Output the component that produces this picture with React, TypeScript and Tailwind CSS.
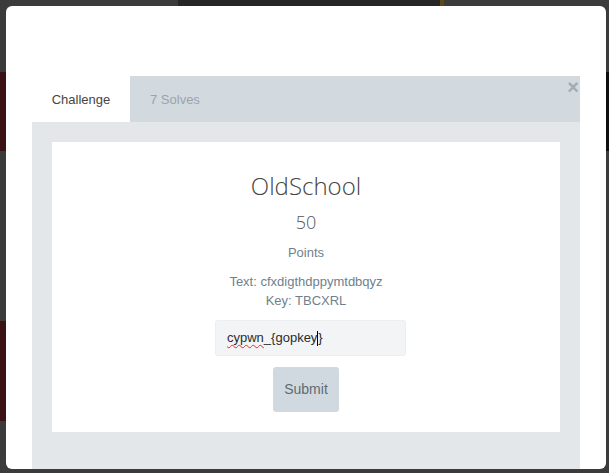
import React from "react";

export default function App() {
  return (
    <div className="relative h-[473px] w-[609px] overflow-hidden bg-[#3b3b3b] font-['Liberation_Sans',Arial,sans-serif]">
      {/* background page (dimmed) */}
      <div className="flex h-full flex-col">
        <div className="flex h-[72px] items-start">
          <div className="ml-[178px] h-[7px] w-[262px] bg-[#262626]" />
          <div className="h-[7px] w-[4px] bg-[#5a4a12]" />
        </div>
        <div className="flex h-[79px] justify-between">
          <div className="w-[6px] bg-[#3a1213]" />
          <div className="w-[3px] bg-[#0c1013]" />
        </div>
        <div className="h-[170px]" />
        <div className="flex h-[100px]">
          <div className="w-[6px] bg-[#3a1213]" />
        </div>
      </div>

      {/* modal */}
      <div className="absolute left-[6px] top-[6px] h-[463px] w-[600px] rounded-[6px] bg-white px-[26px] pt-[70px]">
        <div className="relative flex h-[46px] bg-[#d2d9df] text-[13px]">
          <div className="flex w-[98px] items-center justify-center bg-white pt-[1px] text-[#454545]">
            Challenge
          </div>
          <div className="flex items-center pl-[20px] pt-[1px] text-[#9ba4ab]">7 Solves</div>
          <div className="absolute right-[1px] top-[1px] text-[20px] font-bold leading-[20px] text-[#a4abb0]">
            ×
          </div>
        </div>
        <div className="bg-[#e3e7ea] px-[20px] pb-[37px] pt-[20px]">
          <div className="flex h-[290px] flex-col items-center bg-white pt-[29px]">
            <div className="font-['Open_Sans',sans-serif] text-[24px] font-light leading-[30px] text-[#444]">
              OldSchool
            </div>
            <div className="mt-[9px] font-['Open_Sans',sans-serif] text-[18px] font-light leading-[24px] text-[#555]">
              50
            </div>
            <div className="mt-[10px] text-[13px] leading-[18px] text-[#6f7f8e]">Points</div>
            <div className="mt-[10px] text-center text-[13px] leading-[19px] text-[#6f7f8e]">
              <div>Text: cfxdigthdppymtdbqyz</div>
              <div>Key: TBCXRL</div>
            </div>
            <div className="mt-[10px] flex w-full justify-center pl-[9px]">
              <div className="flex h-[36px] w-[191px] items-center rounded-[3px] border border-[#eceef0] bg-[#f3f4f6] px-[11px] text-[13px] text-[#2b2b2b]">
                <span className="underline decoration-[#e03030] decoration-wavy decoration-1 underline-offset-2">cypwn</span>
                <span>_{"{"}gopkey</span>
                <span className="inline-block h-[15px] w-[1px] bg-black" />
                <span>{"}"}</span>
              </div>
            </div>
            <div className="mt-[11px] flex h-[45px] w-[66px] items-center justify-center rounded-[3px] bg-[#d0d9df] text-[14px] text-[#5f6b73]">
              Submit
            </div>
          </div>
        </div>
      </div>
    </div>
  );
}
